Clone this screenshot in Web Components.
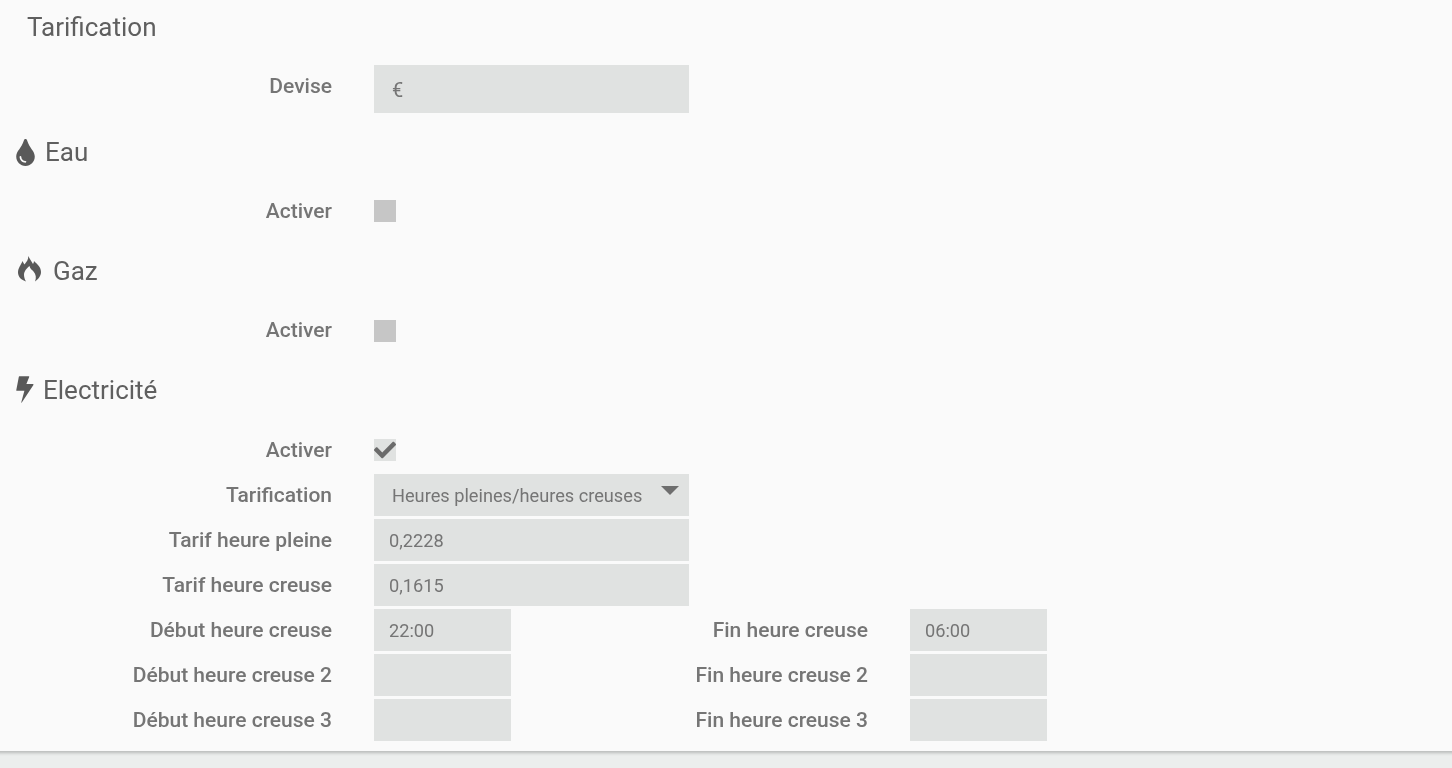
<!DOCTYPE html>
<html lang="fr">
<head>
<meta charset="utf-8">
<title>Tarification</title>
<style>
  html, body { margin: 0; height: 768px; overflow: hidden; background: #eceeed; font-family: Roboto, sans-serif; }
</style>
</head>
<body>
<tarif-panel>
  <tarif-heading style="--indent:27px; --head-h:54px">Tarification</tarif-heading>
  <tarif-row style="--top:11px; --bottom:15px; --label-shift:-3px" label="Devise"><tarif-field tall pad="18" style="font-size:20px; --text-shift:1px">€</tarif-field></tarif-row>

  <tarif-heading icon="tint">Eau</tarif-heading>
  <tarif-row style="--top:24px; --bottom:25px" label="Activer"><tarif-check></tarif-check></tarif-row>

  <tarif-heading icon="fire">Gaz</tarif-heading>
  <tarif-row style="--top:25px; --bottom:24px; --label-shift:-1px" label="Activer"><tarif-check></tarif-check></tarif-row>

  <tarif-heading icon="bolt">Electricité</tarif-heading>
  <tarif-row style="--top:25px; --bottom:13px" label="Activer"><tarif-check checked></tarif-check></tarif-row>

  <tarif-row label="Tarification"><tarif-field select pad="18">Heures pleines/heures creuses</tarif-field></tarif-row>
  <tarif-row style="--top:3px" label="Tarif heure pleine"><tarif-field>0,2228</tarif-field></tarif-row>
  <tarif-row style="--top:3px" label="Tarif heure creuse"><tarif-field>0,1615</tarif-field></tarif-row>
  <tarif-row style="--top:3px" label="Début heure creuse" label2="Fin heure creuse"><tarif-field short>22:00</tarif-field><tarif-field slot="second" short>06:00</tarif-field></tarif-row>
  <tarif-row style="--top:3px" label="Début heure creuse 2" label2="Fin heure creuse 2"><tarif-field short></tarif-field><tarif-field slot="second" short></tarif-field></tarif-row>
  <tarif-row style="--top:3px" label="Début heure creuse 3" label2="Fin heure creuse 3"><tarif-field short></tarif-field><tarif-field slot="second" short></tarif-field></tarif-row>
</tarif-panel>

<script type="module">
  const icons = {
    tint: {
      box: "0 0 352 512", w: 19, h: 27, gap: 10, left: 16, up: 0,
      d: "M205.22 22.09c-7.94-28.78-49.44-30.12-58.44 0C100.01 179.85 0 222.72 0 333.91 0 432.35 78.72 512 176 512s176-79.65 176-178.09c0-111.75-99.79-153.34-146.78-311.82zM176 448c-61.75 0-112-50.25-112-112 0-8.84 7.16-16 16-16s16 7.16 16 16c0 44.11 35.89 80 80 80 8.84 0 16 7.16 16 16s-7.16 16-16 16z"
    },
    fire: {
      box: "0 0 24 26", w: 24, h: 26, gap: 11, left: 18, up: 2,
      d: "M10.3 0C11.5 3 13.5 5 15 8 15.6 7 16 6 16 5 19 8 23 11 23 16 23 20 20.5 23 17 25.5 18.5 22 18 18 15.5 15.5 14 14 12 12.5 11.5 10 9 12 6 15 6 19 6 21 6.8 23.5 8 25.5 3.5 24 0 21 0 16.5 0 12 3 9 4.5 5 5.2 6.5 5.8 7.5 6.5 8.5 8.5 6 10.5 3.5 10.3 0Z"
    },
    bolt: {
      box: "0 0 18 27", w: 18, h: 27, gap: 9, left: 16, up: 1,
      d: "M3.4 0.3H12.8Q13.5 0.3 13.2 1.1L10.4 8.1H17Q17.8 8.1 17.4 8.9L5.8 26.6Q5.2 27.2 5.3 26.2L8.4 14.7H0.9Q0.1 14.7 0.3 13.9L2.8 0.9Q2.9 0.3 3.4 0.3Z"
    }
  };

  class TarifPanel extends HTMLElement {
    constructor() {
      super();
      this.attachShadow({mode: "open"});
      this.shadowRoot.innerHTML = `
      <style>
        :host {
          display: flex;
          flex-direction: column;
          height: 751px;
          box-sizing: border-box;
          margin: 0 -8px;
          padding: 0 8px;
          background: #fafafa;
          box-shadow: 0 2px 3px rgba(0, 0, 0, .22);
        }
      </style>
      <slot></slot>
      `;
    }
  }

  class TarifHeading extends HTMLElement {
    constructor() {
      super();
      this.attachShadow({mode: "open"});
    }

    connectedCallback() {
      const icon = icons[this.getAttribute("icon")];
      const svg = icon
        ? `<svg style="margin:-${icon.up * 2}px ${icon.gap}px 0 ${icon.left}px" width="${icon.w}" height="${icon.h}" viewBox="${icon.box}"><path fill="#595959" d="${icon.d}"/></svg>`
        : "";
      this.shadowRoot.innerHTML = `
      <style>
        :host {
          display: flex;
          align-items: center;
          height: var(--head-h, 48px);
          padding-left: var(--indent, 0);
          font-size: 26px;
          color: #5f5f5f;
        }
        svg { flex: none; }
        span { will-change: transform; }
      </style>
      ${svg}<span><slot></slot></span>
      `;
    }
  }

  class TarifRow extends HTMLElement {
    constructor() {
      super();
      this.attachShadow({mode: "open"});
    }

    connectedCallback() {
      const label2 = this.getAttribute("label2");
      this.shadowRoot.innerHTML = `
      <style>
        :host {
          display: grid;
          grid-template-columns: 332px 137px 315px 137px;
          column-gap: 42px;
          align-items: center;
          padding-top: var(--top, 0);
          padding-bottom: var(--bottom, 0);
        }
        .main { grid-column: 2 / span 2; }
        .main.half { grid-column: 2; }
        .label {
          text-align: right;
          font-size: 21px;
          line-height: 21px;
          font-weight: 500;
          color: #757575;
          white-space: nowrap;
          transform: translateY(var(--label-shift, 0));
          will-change: transform;
        }
      </style>
      <div class="label">${this.getAttribute("label")}</div>
      <div class="main ${label2 ? "half" : ""}"><slot></slot></div>
      ${label2 ? `<div class="label">${label2}</div><div><slot name="second"></slot></div>` : ""}
      `;
    }
  }

  class TarifField extends HTMLElement {
    constructor() {
      super();
      this.attachShadow({mode: "open"});
    }

    connectedCallback() {
      const pad = this.getAttribute("pad") || 15;
      const isSelect = this.hasAttribute("select");
      this.shadowRoot.innerHTML = `
      <style>
        :host {
          display: flex;
          align-items: center;
          box-sizing: border-box;
          width: 315px;
          height: 42px;
          padding-left: ${pad}px;
          background: #e0e2e1;
          font-size: 18.2px;
          color: #757575;
          position: relative;
        }
        :host([short]) { width: 137px; }
        :host([tall]) { height: 48px; }
        span {
          transform: translateY(var(--text-shift, 0));
          will-change: transform;
        }
        .arrow {
          position: absolute;
          left: 287px;
          top: 12px;
        }
      </style>
      <span><slot></slot></span>
      ${isSelect ? `<svg class="arrow" width="18" height="9" viewBox="0 0 18 9"><path fill="#6e6e6e" d="M0 0h18L9 9z"/></svg>` : ""}
      `;
    }
  }

  class TarifCheck extends HTMLElement {
    constructor() {
      super();
      this.attachShadow({mode: "open"});
    }

    connectedCallback() {
      const checked = this.hasAttribute("checked");
      this.shadowRoot.innerHTML = `
      <style>
        :host {
          display: block;
          width: 22px;
          height: 22px;
          background: #c6c6c6;
        }
        :host([checked]) { background: #e0e2e1; }
        svg { display: block; }
      </style>
      ${checked ? `<svg width="22" height="22" viewBox="0 0 512 512"><path fill="#6b6b6b" d="M173.898 439.404l-166.4-166.4c-9.997-9.997-9.997-26.206 0-36.204l36.203-36.204c9.997-10.998 26.207-10.998 36.204 0L192 312.69 432.095 72.596c9.997-9.997 26.207-9.997 36.204 0l36.203 36.204c9.997 9.997 9.997 26.206 0 36.204l-294.4 294.401c-9.998 9.997-26.207 9.997-36.204-.001z"/></svg>` : ""}
      `;
    }
  }

  customElements.define("tarif-panel", TarifPanel);
  customElements.define("tarif-heading", TarifHeading);
  customElements.define("tarif-row", TarifRow);
  customElements.define("tarif-field", TarifField);
  customElements.define("tarif-check", TarifCheck);
</script>
</body>
</html>
